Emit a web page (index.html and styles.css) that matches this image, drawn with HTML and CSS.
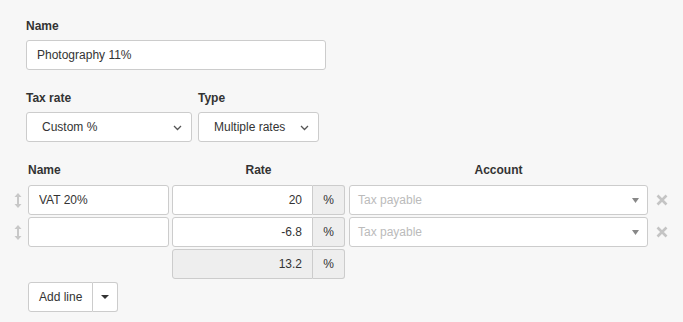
FILE: index.html
```html
<!doctype html>
<html>
<head>
<meta charset="utf-8">
<title>Tax rate</title>
<link rel="stylesheet" href="styles.css">
</head>
<body>
<div class="form">
	<div class="field">
		<label class="label">Name</label>
		<input class="input name-input" type="text" value="Photography 11%">
	</div>

	<div class="field-row">
		<div class="field">
			<label class="label">Tax rate</label>
			<div class="select tax-select">
				<span>Custom %</span>
				<svg class="chevron" width="9" height="6" viewBox="0 0 9 6"><path d="M1 1 L4.5 4.5 L8 1" fill="none" stroke="#555" stroke-width="1.3"/></svg>
			</div>
		</div>
		<div class="field">
			<label class="label">Type</label>
			<div class="select type-select">
				<span>Multiple rates</span>
				<svg class="chevron" width="9" height="6" viewBox="0 0 9 6"><path d="M1 1 L4.5 4.5 L8 1" fill="none" stroke="#555" stroke-width="1.3"/></svg>
			</div>
		</div>
	</div>

	<div class="lines">
		<div class="line line-head">
			<div class="col-drag"></div>
			<div class="col-name">Name</div>
			<div class="col-rate">Rate</div>
			<div class="col-account">Account</div>
			<div class="col-remove"></div>
		</div>

		<div class="line">
			<div class="col-drag"><svg width="8" height="17" viewBox="0 0 8 17"><path d="M4 3 V14" stroke="#c8c8c8" stroke-width="2"/><path d="M0.5 5 L4 1 L7.5 5 Z M0.5 12 L4 16 L7.5 12 Z" fill="#c8c8c8"/></svg></div>
			<div class="col-name"><input class="input" type="text" value="VAT 20%"></div>
			<div class="col-rate group">
				<input class="input rate-input" type="text" value="20">
				<span class="addon">%</span>
			</div>
			<div class="col-account">
				<div class="select account-select">
					<span class="placeholder">Tax payable</span>
					<svg width="7" height="5" viewBox="0 0 7 5"><path d="M0 0 H7 L3.5 5 Z" fill="#888"/></svg>
				</div>
			</div>
			<div class="col-remove"><svg width="12" height="12" viewBox="0 0 12 12"><path d="M1.5 1.5 L10.5 10.5 M10.5 1.5 L1.5 10.5" stroke="#c4c4c4" stroke-width="2.6"/></svg></div>
		</div>

		<div class="line">
			<div class="col-drag"><svg width="8" height="17" viewBox="0 0 8 17"><path d="M4 3 V14" stroke="#c8c8c8" stroke-width="2"/><path d="M0.5 5 L4 1 L7.5 5 Z M0.5 12 L4 16 L7.5 12 Z" fill="#c8c8c8"/></svg></div>
			<div class="col-name"><input class="input" type="text" value=""></div>
			<div class="col-rate group">
				<input class="input rate-input" type="text" value="-6.8">
				<span class="addon">%</span>
			</div>
			<div class="col-account">
				<div class="select account-select">
					<span class="placeholder">Tax payable</span>
					<svg width="7" height="5" viewBox="0 0 7 5"><path d="M0 0 H7 L3.5 5 Z" fill="#888"/></svg>
				</div>
			</div>
			<div class="col-remove"><svg width="12" height="12" viewBox="0 0 12 12"><path d="M1.5 1.5 L10.5 10.5 M10.5 1.5 L1.5 10.5" stroke="#c4c4c4" stroke-width="2.6"/></svg></div>
		</div>

		<div class="line">
			<div class="col-drag"></div>
			<div class="col-name"></div>
			<div class="col-rate group">
				<input class="input rate-input total" type="text" value="13.2" readonly>
				<span class="addon">%</span>
			</div>
		</div>
	</div>

	<div class="add-line">
		<button class="btn">Add line</button><button class="btn btn-caret"><svg width="8" height="4" viewBox="0 0 8 4"><path d="M0 0 H8 L4 4 Z" fill="#333"/></svg></button>
	</div>
</div>
</body>
</html>
```

FILE: styles.css
```css
* {box-sizing:border-box; }
body {margin:0; background:#f7f7f7; font:12px "Liberation Sans",Arial,sans-serif; color:#333; }
.form {padding:18px 0 0 26px; }
.label {display:block; height:16px; line-height:16px; margin-bottom:6px; font-weight:bold; }
.field-row {display:flex; gap:6px; margin-top:20px; }
.input {display:block; height:30px; margin:0; padding:0 10px; border:1px solid #ccc; border-radius:3px; background:#fff; font:12px "Liberation Sans",Arial,sans-serif; color:#333; outline:none; }
.name-input {width:300px; }
.select {display:flex; align-items:center; justify-content:space-between; height:30px; padding:0 9px 0 15px; border:1px solid #ccc; border-radius:3px; background:#fff; }
.tax-select {width:166px; }
.type-select {width:121px; }
.chevron {margin-top:1px; }

.lines {margin:20px 0 0 -18px; }
.line {display:flex; align-items:center; margin-bottom:2px; }
.line-head {height:16px; margin-bottom:7px; font-weight:bold; }
.col-drag {width:20px; display:flex; justify-content:center; padding-right:1px; }
.col-name {width:141px; margin-right:3px; }
.col-name .input {width:100%; }
.col-rate {width:173px; margin-right:4px; text-align:center; }
.col-account {width:299px; text-align:center; }
.col-remove {width:26px; display:flex; justify-content:center; padding-left:1px; }

.group {display:flex; }
.rate-input {flex:1; width:0; text-align:right; border-radius:3px 0 0 3px; }
.rate-input.total {background:#eee; }
.addon {width:32px; height:30px; line-height:28px; text-align:center; border:1px solid #ccc; border-left:0; border-radius:0 3px 3px 0; background:#eee; }
.account-select {padding:0 8px 0 8px; }
.placeholder {color:#bbb; }

.add-line {display:flex; margin:3px 0 0 2px; }
.btn {height:30px; margin:0; padding:0 10px; border:1px solid #ccc; border-radius:3px 0 0 3px; background:#fff; font:12px "Liberation Sans",Arial,sans-serif; color:#333; }
.btn-caret {width:25px; padding:0; border-left:0; border-radius:0 3px 3px 0; display:flex; align-items:center; justify-content:center; }
```
